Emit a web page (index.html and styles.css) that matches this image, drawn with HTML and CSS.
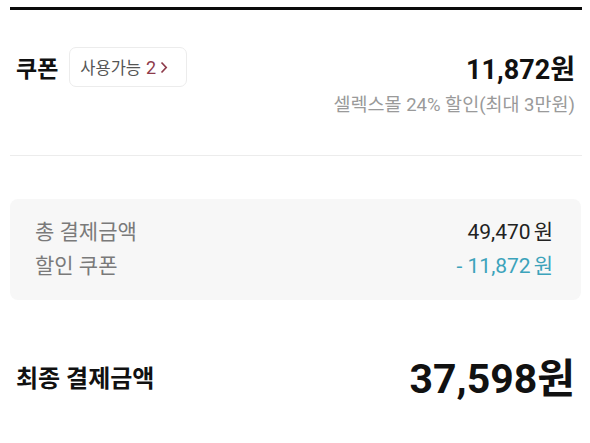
FILE: index.html
```html
<!DOCTYPE html>
<html lang="ko">
<head>
<meta charset="utf-8">
<link rel="stylesheet" href="styles.css">
</head>
<body>
<div class="page">
  <section class="coupon">
    <div class="coupon-row">
      <div class="coupon-left">
        <span class="coupon-title">쿠폰</span>
        <button class="avail">사용가능 <span class="avail-num">2</span><svg class="chev" width="8" height="13" viewBox="0 0 8 13"><path d="M1.5 1.5 L6.2 6.5 L1.5 11.5" fill="none" stroke="#8e3b4b" stroke-width="1.7"/></svg></button>
      </div>
      <span class="coupon-amount">11,872원</span>
    </div>
    <div class="coupon-sub">셀렉스몰 24% 할인(최대 3만원)</div>
  </section>
  <hr class="divider">
  <section class="summary">
    <div class="sum-row"><span class="sum-label">총 결제금액</span><span class="sum-val">49,470<span class="won">원</span></span></div>
    <div class="sum-row"><span class="sum-label">할인 쿠폰</span><span class="sum-val discount">- 11,872<span class="won">원</span></span></div>
  </section>
  <section class="final">
    <span class="final-label">최종 결제금액</span>
    <span class="final-amount">37,598원</span>
  </section>
</div>
</body>
</html>
```
FILE: styles.css
```css
* { box-sizing: border-box; }
body {
  margin: 0;
  background: #fff;
  font-family: Roboto, "Noto Sans CJK KR", sans-serif;
  color: #111;
}
.page {
  margin: 7px 8px 0 10px;
}
.coupon {
  border-top: 3px solid #0a0a0a;
  padding: 37px 7px 0 6px;
}
.coupon-row {
  display: flex;
  align-items: center;
  justify-content: space-between;
  height: 40px;
}
.coupon-left {
  display: flex;
  align-items: center;
  gap: 11px;
}
.coupon-title {
  font-size: 23px;
  font-weight: 700;
}
.avail {
  display: flex;
  align-items: center;
  height: 40px;
  width: 118px;
  padding: 0 0 0 10px;
  border: 1px solid #ececec;
  border-radius: 7px;
  background: #fff;
  font-family: Roboto, "Noto Sans CJK KR", sans-serif;
  font-size: 16.5px;
  color: #555;
}
.avail-num {
  color: #8e3b4b;
  font-size: 18px;
  margin-left: 5px;
  margin-right: 4px;
}
.coupon-amount {
  font-size: 27px;
  font-weight: 700;
}
.coupon-sub {
  text-align: right;
  font-size: 18.5px;
  color: #9a9a9a;
  margin-top: 3px;
}
.divider {
  border: 0;
  border-top: 1px solid #ececec;
  margin: 39px 0 0;
}
.summary {
  margin: 43px 1px 0 0;
  background: #f7f7f7;
  border-radius: 8px;
  padding: 18px 28px 23px 25px;
  display: flex;
  flex-direction: column;
  gap: 8px;
}
.sum-row {
  display: flex;
  justify-content: space-between;
  align-items: center;
  height: 26px;
  font-size: 21px;
}
.sum-label { color: #7a7a7a; }
.sum-val { color: #222; }
.won { margin-left: 3px; }
.discount { color: #3ca3bb; }
.final {
  display: flex;
  justify-content: space-between;
  align-items: center;
  padding: 55px 7px 0 6px;
  line-height: 1.2;
}
.final-label {
  font-size: 24px;
  font-weight: 700;
}
.final-amount {
  font-size: 41px;
  font-weight: 700;
}
```
